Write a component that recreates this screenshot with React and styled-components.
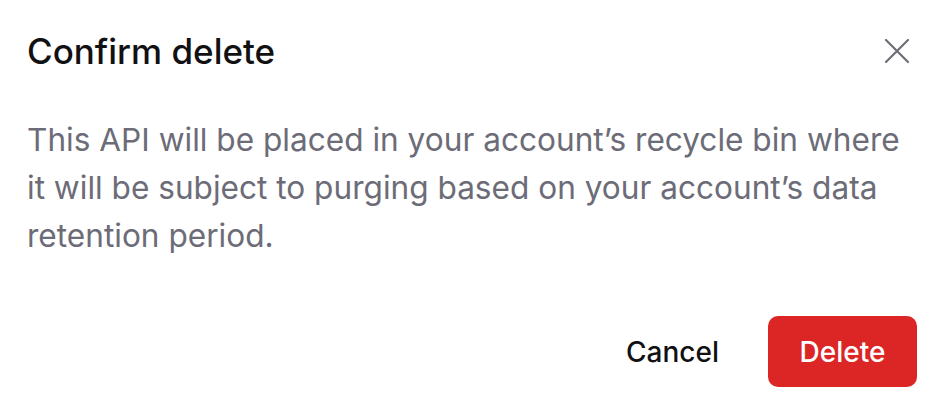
import React from 'react'
import styled, { createGlobalStyle } from 'styled-components'

const GlobalStyle = createGlobalStyle`
  html, body {
    margin: 0;
    padding: 0;
    background: #ffffff;
  }
  body {
    font-family: Inter, "Noto Sans", sans-serif;
    -webkit-font-smoothing: antialiased;
  }
`

const Dialog = styled.div`
  width: 942px;
  height: 416px;
  box-sizing: border-box;
  padding: 26px 25px 29px 27px;
  display: flex;
  flex-direction: column;
  background: #fff;
`

const Header = styled.div`
  display: flex;
  align-items: center;
  justify-content: space-between;
  height: 50px;
`

const Title = styled.h2`
  margin: 0;
  font-size: 35px;
  line-height: 50px;
  font-weight: 500;
  color: #111113;
`

const CloseButton = styled.button`
  background: transparent;
  border: none;
  padding: 0;
  margin-right: 4px;
  width: 32px;
  height: 32px;
  display: flex;
  align-items: center;
  justify-content: center;
  cursor: pointer;
  color: #6e6e78;
`

const Body = styled.p`
  margin: 40px 0 0;
  font-size: 31.6px;
  line-height: 48px;
  color: #6c6c78;
  max-width: 890px;
`

const Footer = styled.div`
  margin-top: auto;
  display: flex;
  justify-content: flex-end;
  align-items: center;
  gap: 49px;
`

const Button = styled.button`
  font-family: inherit;
  font-size: 28px;
  font-weight: 500;
  border: none;
  cursor: pointer;
  height: 71px;
  border-radius: 10px;
  padding: 0;
  background: ${(p) => (p.$danger ? '#dc2626' : 'transparent')};
  color: ${(p) => (p.$danger ? '#ffffff' : '#111113')};
  width: ${(p) => (p.$danger ? '149px' : 'auto')};
`

const App = () => {
  return (
    <>
      <GlobalStyle />
      <Dialog>
        <Header>
          <Title>Confirm delete</Title>
          <CloseButton aria-label="Close">
            <svg width="26" height="26" viewBox="0 0 26 26" fill="none">
              <path d="M2 2L24 24M24 2L2 24" stroke="currentColor" strokeWidth="2.2" strokeLinecap="round" />
            </svg>
          </CloseButton>
        </Header>
        <Body>
          This API will be placed in your account’s recycle bin where it will be subject to purging based on your account’s data retention period.
        </Body>
        <Footer>
          <Button>Cancel</Button>
          <Button $danger>Delete</Button>
        </Footer>
      </Dialog>
    </>
  )
}

export default App
